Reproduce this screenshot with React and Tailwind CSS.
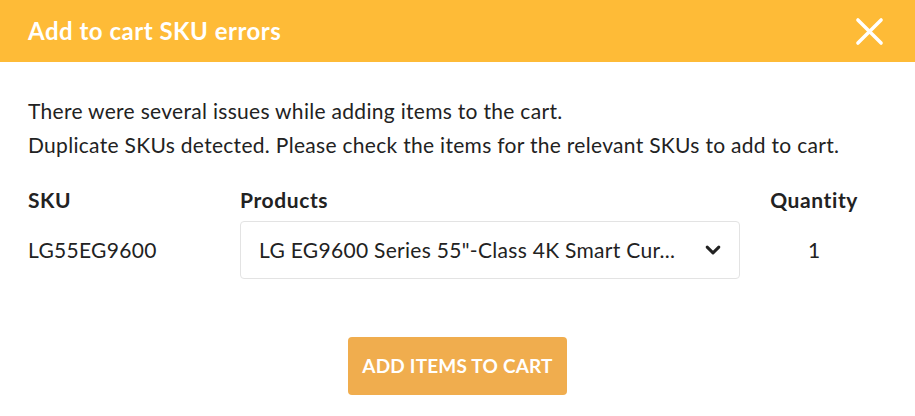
import React from 'react'

const App = () => {
  return (
    <div className="w-[915px] h-[416px] bg-white overflow-hidden" style={{ fontFamily: 'Lato, "Noto Sans", sans-serif' }}>
      {/* Header */}
      <div className="h-[62px] bg-[#febb37] flex items-center justify-between pl-[28px] pr-[31px]">
        <h2 className="text-[24px] font-bold text-white tracking-[0.5px]">Add to cart SKU errors</h2>
        <button className="text-white">
          <svg width="29" height="29" viewBox="0 0 30 30" fill="none" stroke="currentColor" strokeWidth="3.6" strokeLinecap="round">
            <path d="M3 3 L27 27 M27 3 L3 27" />
          </svg>
        </button>
      </div>

      {/* Body */}
      <div className="pl-[28px] pr-[57px] pt-[32px] text-[#222]">
        <p className="text-[21px] leading-[34px] tracking-[0.3px]">
          There were several issues while adding items to the cart.
          <br />
          Duplicate SKUs detected. Please check the items for the relevant SKUs to add to cart.
        </p>

        <div className="grid grid-cols-[212px_500px_1fr] items-center mt-[23px]">
          <div className="text-[21px] font-bold leading-[30px] tracking-[0.6px]">SKU</div>
          <div className="text-[21px] font-bold leading-[30px] tracking-[0.6px]">Products</div>
          <div className="text-[21px] font-bold leading-[30px] tracking-[0.6px] text-right">Quantity</div>

          <div className="text-[21px] tracking-[0.3px] mt-[6px]">LG55EG9600</div>
          <div className="mt-[6px] h-[58px] border border-[#e3e3e3] rounded-[4px] flex items-center justify-between pl-[18px] pr-[16px]">
            <span className="text-[21px] tracking-[0.3px] truncate">LG EG9600 Series 55"-Class 4K Smart Cur...</span>
            <svg width="20" height="20" viewBox="0 0 24 24" fill="none" stroke="#222" strokeWidth="3.6" strokeLinecap="round" strokeLinejoin="round" className="ml-4 shrink-0">
              <path d="M5 8.5 L12 15.5 L19 8.5" />
            </svg>
          </div>
          <div className="mt-[6px] flex justify-end">
            <span className="w-[88px] text-center text-[21px]">1</span>
          </div>
        </div>
      </div>

      <div className="flex justify-center mt-[58px]">
        <button className="w-[219px] h-[58px] bg-[#f0ad4e] rounded-[4px] text-white font-bold text-[19px] uppercase tracking-[0.2px]">
          Add items to cart
        </button>
      </div>
    </div>
  )
}

export default App
